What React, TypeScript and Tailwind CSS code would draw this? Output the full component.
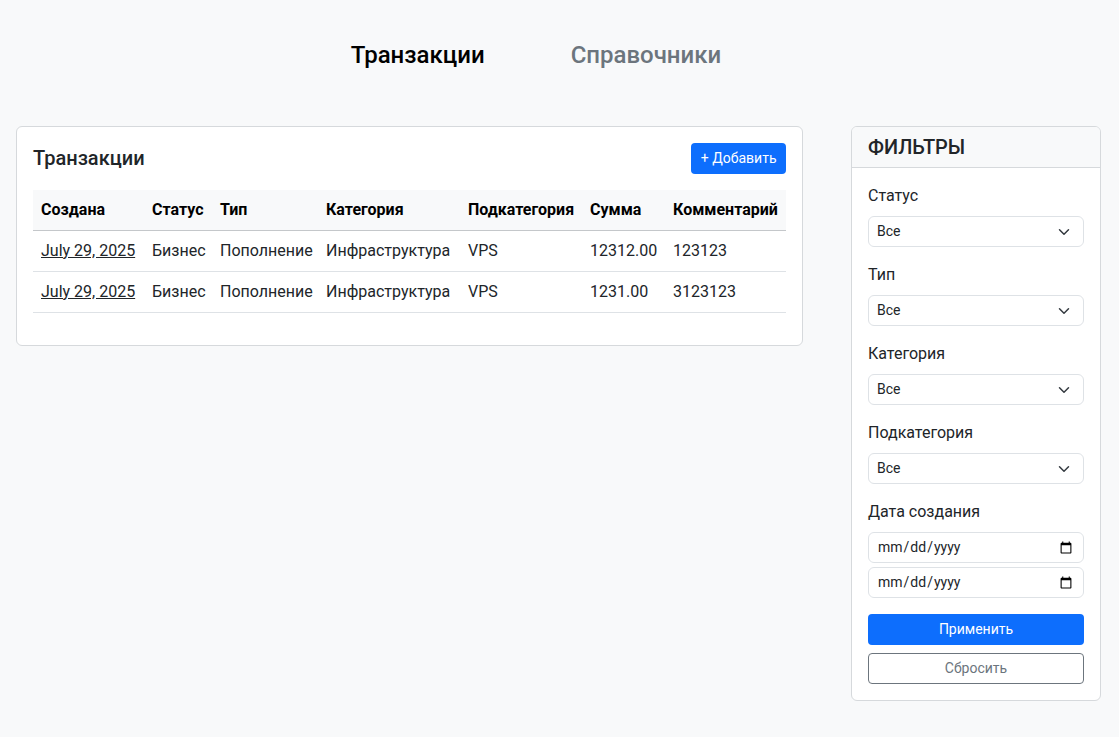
import React from "react";

const Chevron = () => (
  <svg className="pointer-events-none absolute right-[12px] top-1/2 -translate-y-1/2" width="16" height="12" viewBox="0 0 16 16" fill="none">
    <path d="m2 5 6 6 6-6" stroke="#343a40" strokeWidth="2" strokeLinecap="round" strokeLinejoin="round" />
  </svg>
);

const SelectBox = () => (
  <div className="relative">
    <select className="block h-[31px] w-full appearance-none rounded-[6px] border border-[#dee2e6] bg-white pl-[8px] pr-[36px] text-[14px] text-[#212529] outline-none">
      <option>Все</option>
    </select>
    <Chevron />
  </div>
);

const rows = [
  { date: "July 29, 2025", status: "Бизнес", type: "Пополнение", cat: "Инфраструктура", sub: "VPS", sum: "12312.00", comment: "123123" },
  { date: "July 29, 2025", status: "Бизнес", type: "Пополнение", cat: "Инфраструктура", sub: "VPS", sum: "1231.00", comment: "3123123" },
];

export default function App() {
  return (
    <div className="min-h-[737px] bg-[#f8f9fa] text-[#212529]" style={{ fontFamily: "Roboto, 'Noto Sans', sans-serif" }}>
      <nav className="flex h-[110px] items-center justify-center gap-[86px] pr-[47px]">
        <span className="text-[24px] font-medium text-black">Транзакции</span>
        <span className="text-[24px] font-medium text-[#6c757d]">Справочники</span>
      </nav>
      <div className="mt-[16px] flex items-start gap-[48px] pl-[16px]">
        <div className="w-[787px] rounded-[6px] border border-[#d6d9dc] bg-white p-[16px] pb-[32px]">
          <div className="flex h-[30px] items-center justify-between">
            <h2 className="text-[20px] font-medium leading-[24px]">Транзакции</h2>
            <button className="h-[31px] rounded-[4px] bg-[#0d6efd] px-[9.5px] text-[14px] text-white">+ Добавить</button>
          </div>
          <table className="mt-[17px] w-[753px] table-fixed border-collapse text-[16px]">
            <colgroup>
              <col className="w-[111px]" />
              <col className="w-[68px]" />
              <col className="w-[106px]" />
              <col className="w-[142px]" />
              <col className="w-[122px]" />
              <col className="w-[83px]" />
              <col className="w-[121px]" />
            </colgroup>
            <thead>
              <tr className="h-[40px] border-b border-[#c4c7ca] bg-[#f8f9fa] text-left">
                {["Создана", "Статус", "Тип", "Категория", "Подкатегория", "Сумма", "Комментарий"].map((h) => (
                  <th key={h} className="whitespace-nowrap px-[8px] font-bold text-black">{h}</th>
                ))}
              </tr>
            </thead>
            <tbody>
              {rows.map((r, i) => (
                <tr key={i} className="h-[41px] border-b border-[#dee2e6]">
                  <td className="whitespace-nowrap px-[8px]"><a className="underline">{r.date}</a></td>
                  <td className="whitespace-nowrap px-[8px]">{r.status}</td>
                  <td className="whitespace-nowrap px-[8px]">{r.type}</td>
                  <td className="whitespace-nowrap px-[8px]">{r.cat}</td>
                  <td className="whitespace-nowrap px-[8px]">{r.sub}</td>
                  <td className="whitespace-nowrap px-[8px]">{r.sum}</td>
                  <td className="whitespace-nowrap px-[8px]">{r.comment}</td>
                </tr>
              ))}
            </tbody>
          </table>
        </div>
        <div className="w-[250px] overflow-hidden rounded-[6px] border border-[#d6d9dc] bg-white">
          <div className="border-b border-[#d6d9dc] bg-[#f8f9fa] px-[16px] py-[8px]">
            <h3 className="text-[20px] font-medium leading-[24px]">ФИЛЬТРЫ</h3>
          </div>
          <div className="px-[16px] pt-[16px] pb-[16px]">
            {["Статус", "Тип", "Категория", "Подкатегория"].map((l) => (
              <div key={l} className="mb-[16px]">
                <label className="mb-[8px] block text-[16px] leading-[24px]">{l}</label>
                <SelectBox />
              </div>
            ))}
            <div className="mb-[16px]">
              <label className="mb-[8px] block text-[16px] leading-[24px]">Дата создания</label>
              <input type="date" className="mb-[4px] block h-[31px] w-full rounded-[6px] border border-[#dee2e6] bg-white px-[8px] text-[14px] text-[#212529]" />
              <input type="date" className="block h-[31px] w-full rounded-[6px] border border-[#dee2e6] bg-white px-[8px] text-[14px] text-[#212529]" />
            </div>
            <button className="mb-[8px] block h-[31px] w-full rounded-[4px] bg-[#0d6efd] text-[14px] text-white">Применить</button>
            <button className="block h-[31px] w-full rounded-[4px] border border-[#6c757d] bg-white text-[14px] text-[#6c757d]">Сбросить</button>
          </div>
        </div>
      </div>
    </div>
  );
}
